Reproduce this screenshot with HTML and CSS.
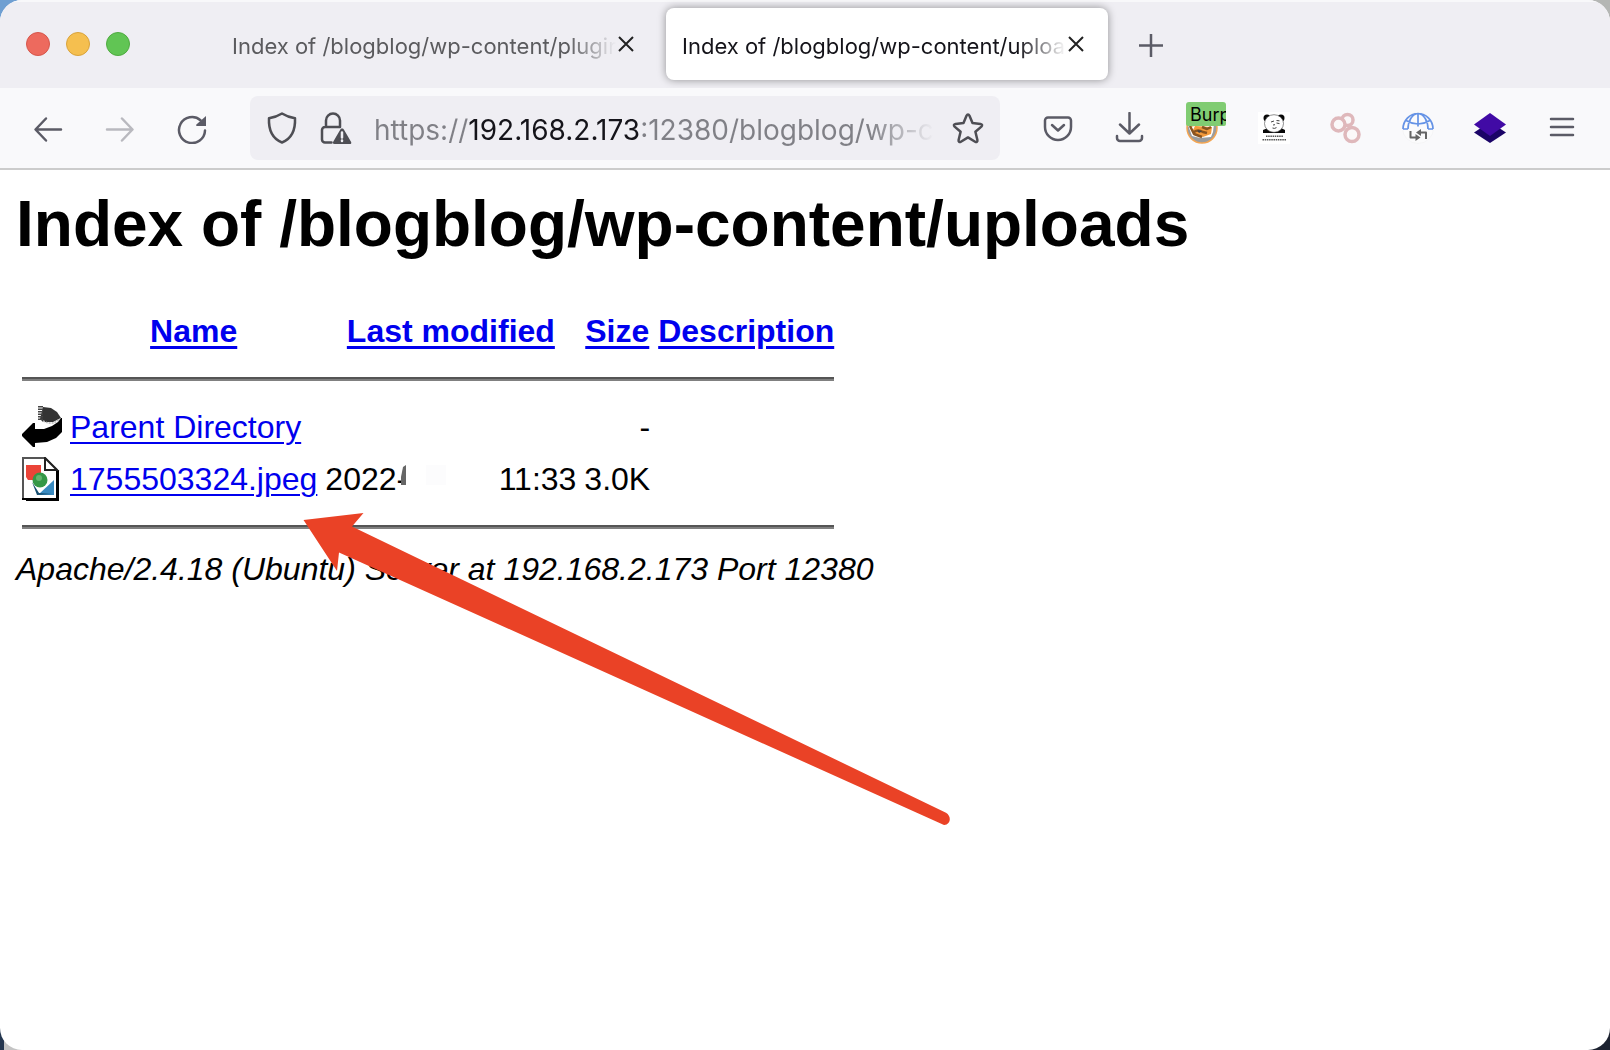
FILE: index.html
```html
<!DOCTYPE html>
<html lang="en">
<head>
<meta charset="utf-8">
<title>Index of /blogblog/wp-content/uploads</title>
<link rel="stylesheet" href="styles.css">
</head>
<body>
<div class="window">
  <header class="tab-bar">
    <div class="window-controls">
      <button class="light light-close" aria-label="Close window"></button>
      <button class="light light-minimize" aria-label="Minimize window"></button>
      <button class="light light-zoom" aria-label="Zoom window"></button>
    </div>
    <nav class="tabs" aria-label="Tabs">
      <div class="tab">
        <button class="tab-title">Index of /blogblog/wp-content/plugins</button>
        <button class="tab-close" aria-label="Close tab"><svg width="20" height="20" viewBox="0 0 20 20"><path d="M3 3l14 14M17 3L3 17"/></svg></button>
      </div>
      <div class="tab tab-active">
        <button class="tab-title">Index of /blogblog/wp-content/uploads</button>
        <button class="tab-close" aria-label="Close tab"><svg width="20" height="20" viewBox="0 0 20 20"><path d="M3 3l14 14M17 3L3 17"/></svg></button>
      </div>
      <button class="new-tab" aria-label="New tab"><svg width="24" height="26" viewBox="0 0 24 26"><path d="M12 3v23M0 14.500h24"/></svg></button>
    </nav>
  </header>

  <div class="toolbar">
    <div class="nav-buttons">
      <button class="tool" aria-label="Back"><svg width="32" height="32" viewBox="0 0 32 32"><path d="M29 17.500H4M14 6.500L3.500 17.500 14 28.500"/></svg></button>
      <button class="tool" aria-label="Forward" disabled><svg width="32" height="32" viewBox="0 0 32 32"><path d="M3 17.500h25M18 6.500l10.500 11L18 28.500"/></svg></button>
      <button class="tool" aria-label="Reload"><svg width="32" height="32" viewBox="0 0 32 32"><path d="M24.500 8.200A13 13 0 1 0 29 18.500"/><path class="solid" d="M30 4v10H21c-1 0-1.200-.8-.6-1.400z"/></svg></button>
    </div>
    <div class="url-bar">
      <button class="url-icon" aria-label="Tracking protection"><svg width="32" height="32" viewBox="0 0 32 32"><path d="M16 1.500c4 2.500 8 4 13 4.800C29.500 17 26 26.500 16 30.500 6 26.500 2.500 17 3 6.300 8 5.500 12 4 16 1.500z"/></svg></button>
      <button class="url-icon" aria-label="Connection not secure"><svg width="32" height="32" viewBox="0 0 32 32"><path d="M11.500 30.500H5a3 3 0 0 1-3-3V18a3 3 0 0 1 3-3h14.500M6 15V8.500a7 7 0 0 1 14 0V15"/><path class="solid" d="M22 16.500c1 0 1.600.5 2 1.200l7 12c.8 1.500 0 2.300-1.200 2.300H14.500c-1.400 0-2-1-1.300-2.300l7-12c.3-.7 1-1.200 1.800-1.200z"/><path class="mark" d="M22 20.500v5M22 28.500v.5"/></svg></button>
      <input class="url-text" type="text" aria-label="Address" value="https://192.168.2.173:12380/blogblog/wp-content/uploads/">
      <button class="url-icon" aria-label="Bookmark this page"><svg width="32" height="32" viewBox="0 0 32 32"><path d="M16 2.500c.8 0 1.200.6 1.500 1.200l3 7.300 8 .9c1.800.3 2 1.600.9 2.700l-6 5.200 2 8.200c.3 1.700-.8 2.600-2.300 1.700L16 25.400l-7.100 4.300c-1.500.9-2.600 0-2.300-1.700l2-8.200-6-5.200c-1.100-1.100-.9-2.400.9-2.700l8-.9 3-7.300c.3-.6.700-1.200 1.500-1.200z"/></svg></button>
    </div>
    <div class="extensions">
      <button class="tool" aria-label="Save to Pocket"><svg width="32" height="32" viewBox="0 0 32 32"><path d="M6 5.500h20a3 3 0 0 1 3 3V15a13 13 0 0 1-26 0V8.500a3 3 0 0 1 3-3zM10 13l6 5.500 6-5.500"/></svg></button>
      <button class="tool" aria-label="Downloads"><svg width="32" height="32" viewBox="0 0 32 32"><path d="M15.500 1v20M6 12.500l9.500 9 9.500-9M3 24v2a3 3 0 0 0 3 3h19a3 3 0 0 0 3-3v-2"/></svg></button>
      <button class="tool proxy" aria-label="Proxy: Burp"><svg class="art" width="32" height="32" viewBox="0 0 32 32"><circle cx="16" cy="16" r="15" fill="#9a9c9e" stroke="#f3a552" stroke-width="1.500"/><path fill="#fff" d="M2 13l4 11 8 2 11-1 2-5 1-8z"/><path fill="#f39a3c" d="M4 14l6 0 16 1-1 7-8 3-8-3z"/><path fill="#fff" d="M4 15l5-1-3 6z"/><path fill="none" stroke="#8a5420" d="M4 14l4 8 8 3M16 15l5 2 4-2M8 20q4-3 9 0l4 1"/><path fill="#444" d="M11 18.500q2-1 5 1l-3 1.500z"/></svg><span class="badge">Burp</span></button>
      <button class="tool" aria-label="Panda extension"><svg class="art" width="32" height="32" viewBox="0 0 32 32"><path fill="#fff" d="M0 0h32v32H0z"/><path fill="#080808" d="M5 21v-3l5-2h13l4 2v3z"/><circle cx="9" cy="6" r="3.500" fill="#080808"/><circle cx="23" cy="6" r="3.500" fill="#080808"/><ellipse cx="16" cy="11.500" rx="9.500" ry="8.800" fill="#fff" stroke="#444" stroke-width=".6"/><path fill="none" stroke="#444" stroke-width="1" d="M13 10l3-1M18.500 8.500l3 .3M15 13l2-.3M18.500 11l3 .6M14.500 16q2 1 4-.4"/><g fill="none" stroke="#555" stroke-width="1.500" stroke-dasharray="1.500 .7"><path d="M8 24.300h17M4.500 27.800h24"/></g></svg></button>
      <button class="tool" aria-label="Chained rings extension"><svg class="art" width="32" height="32" viewBox="0 0 32 32"><g fill="#fbf8f9" stroke="#dfb8bb" stroke-width="3.500"><circle cx="17.500" cy="8" r="5.500"/><circle cx="8.500" cy="12.500" r="6.500"/><circle cx="22" cy="22.500" r="7"/></g></svg></button>
      <button class="tool" aria-label="Proxy switcher"><svg class="art" width="32" height="32" viewBox="0 0 32 32"><circle cx="16" cy="16" r="15.500" fill="#fbfbfc" stroke="#efeff0" stroke-width=".5"/><g fill="none" stroke="#6593e6" stroke-width="1.700"><path d="M1 17a15 15.500 0 0 1 30 0M1 17h5M26 17h5M4 8.500q12 7 24 0M6 17C6 9 10 2 16 1.500 22 2 26 9 26 17M16 1.500v13"/></g><path fill="none" stroke="#666" stroke-width="2" d="M8.500 19v6.500h6M24 27v-6.500h-6"/><path fill="#666" d="M13.500 22l5 3.500-5 3.500zM19 17l-5 3.500 5 3.500z"/></svg></button>
      <button class="tool" aria-label="Layers extension"><svg class="art" width="32" height="32" viewBox="0 0 32 32"><path fill="#1b0467" d="M16 10l16 10.500L16 31 0 20.500z"/><path fill="#410aa5" d="M16 1l16 11.500L16 24 0 12.500z"/></svg></button>
      <button class="tool" aria-label="Open application menu"><svg width="32" height="32" viewBox="0 0 32 32"><path d="M5 7h22M5 15h22M5 23h22"/></svg></button>
    </div>
  </div>

  <main class="page">
    <h1>Index of /blogblog/wp-content/uploads</h1>
    <table class="listing">
      <colgroup><col class="col-icon"><col class="col-name"><col class="col-date"><col class="col-size"><col></colgroup>
      <tr class="head">
        <th></th>
        <th><a href="#name">Name</a></th>
        <th><a href="#modified">Last modified</a></th>
        <th><a href="#size">Size</a></th>
        <th><a href="#description">Description</a></th>
      </tr>
      <tr><td colspan="5"><hr></td></tr>
      <tr>
        <td><svg class="file-icon" width="40" height="44" viewBox="0 0 40 44"><path fill="#333" d="M21 2l8 1 6 4 4 6-8 4H21l-3-3z"/><path fill="none" stroke="#444" stroke-width="5" stroke-dasharray="1.500 1" d="M18.500 1v15"/><path fill="none" stroke="#bbb" stroke-width="1.500" stroke-dasharray="2 1" d="M21 16l5 2h6l6-4"/><path fill="#000" d="M39 13h1v14l-6 6-9 4-12 1v4h-2L0 31v-2l11-11h2v6h9l8-3 6-4z"/></svg></td>
        <td><a href="#parent">Parent Directory</a></td>
        <td></td>
        <td class="size">-</td>
        <td></td>
      </tr>
      <tr>
        <td><svg class="file-icon" width="40" height="44" viewBox="0 0 40 44"><path fill="#fff" stroke="#555" stroke-width="2" d="M1 42V1h22l12 12v29z"/><path fill="#000" d="M0 41h34V13h3v31H4v-1H0z"/><path fill="#fff" stroke="#222" stroke-width="2" d="M23 1v12h12z"/><path fill="#eb4438" d="M4 8h15v15H6l-2-3z"/><path fill="#398ac0" d="M32 23v15H16z"/><path fill="#174e70" d="M10 25l7 11 13 1-15 1z"/><circle cx="18" cy="23" r="7.500" fill="#359847"/><circle cx="17" cy="21" r="3" fill="#65b56f"/></svg></td>
        <td><a href="#image">1755503324.jpeg</a></td>
        <td><div class="date"><span>2022-</span><svg class="smudge" width="48" height="20" viewBox="0 0 48 20"><path fill="#fff" d="M2 0h46v20H2z"/><path fill="#666" d="M6 0v20H1V12L3 2z"/><path fill="#fcfcfd" d="M26 0h20v20H26z"/></svg><span>11:33</span></div></td>
        <td class="size">3.0K</td>
        <td></td>
      </tr>
      <tr><td colspan="5"><hr></td></tr>
    </table>
    <address>Apache/2.4.18 (Ubuntu) Server at 192.168.2.173 Port 12380</address>
    <svg class="arrow" width="648" height="316" viewBox="303 512 648 316" aria-hidden="true"><path fill="#ea4226" d="M303.500 520l60-7-11.500 13.500 594 286.200c6 3.500 4.500 12.500-2 12.300L339 552.500 337 571z"/></svg>
  </main>
</div>
</body>
</html>
```
FILE: styles.css
```css
* { box-sizing: border-box; }

body {
  margin: 0;
  background:
    linear-gradient(#6f9fd2, #6f9fd2) 0 0 / 50% 50% no-repeat,
    linear-gradient(#b4b6b4, #b4b6b4) 100% 0 / 50% 50% no-repeat,
    linear-gradient(90deg, #24364f 4px, #c4c4c4 4px) 0 100% / 50% 50% no-repeat,
    #1c2230;
}

button {
  padding: 0;
  border: 0;
  background: none;
  color: inherit;
  font: inherit;
}

svg { display: block; }

.window {
  display: flex;
  flex-direction: column;
  min-height: 100vh;
  overflow: hidden;
  border-radius: 22px;
  background: #fff;
}

/* Tab strip */
.tab-bar {
  display: flex;
  height: 88px;
  padding-left: 26px;
  background: #efeef3;
  box-shadow: inset 0 2px #f8f8fa;
}

.window-controls {
  display: flex;
  align-items: center;
  gap: 16px;
  width: 190px;
}

.light {
  width: 24px;
  height: 24px;
  border: 1px solid;
  border-radius: 50%;
}
.light-close { background: #ed6a5e; border-color: #d6564b; }
.light-minimize { background: #f5bf4f; border-color: #d9a33b; }
.light-zoom { background: #61c554; border-color: #4fab40; }

.tabs {
  display: flex;
  align-items: center;
  gap: 8px;
}

.tab {
  display: flex;
  align-items: center;
  width: 442px;
  height: 72px;
  padding: 0 22px 0 16px;
  border-radius: 8px;
  color: #5b5b5e;
  font: 22px/32px Inter, sans-serif;
}

.tab-active {
  background: #fff;
  color: #15141a;
  box-shadow: 0 0 8px rgba(0, 0, 0, .4);
}

.tab-title {
  flex: 1;
  min-width: 0;
  overflow: hidden;
  padding-top: 4px;
  text-align: left;
  white-space: nowrap;
  mask-image: linear-gradient(to left, transparent, #000 48px);
}

.tab-close svg { fill: none; stroke: #222; stroke-width: 2; }

.new-tab { padding-left: 23px; }
.new-tab svg { fill: none; stroke: #5b5b66; stroke-width: 2.5; }

/* Navigation toolbar */
.toolbar {
  display: flex;
  align-items: center;
  height: 82px;
  padding: 0 32px;
  border-bottom: 2px solid #ccc;
  background: #f9f9fb;
}

.nav-buttons {
  display: flex;
  gap: 40px;
  width: 218px;
}

.tool svg, .url-icon svg {
  fill: none;
  stroke: #5b5b66;
  stroke-width: 2.5;
  stroke-linecap: round;
  stroke-linejoin: round;
}
.tool:disabled { opacity: .4; }
.tool .art { stroke: none; stroke-linecap: butt; }
.tool .solid { fill: #5b5b66; stroke: none; }

.url-bar {
  display: flex;
  flex: 1;
  align-items: center;
  gap: 22px;
  min-width: 0;
  height: 64px;
  padding: 0 16px;
  border-radius: 8px;
  background: #efeef3;
}

.url-icon svg { stroke: #4e4e54; }
.url-icon .solid { fill: #4e4e54; stroke: none; }
.url-icon .mark { stroke: #efeef3; }

.url-text {
  flex: 1;
  min-width: 0;
  height: 48px;
  margin-right: -12px;
  padding: 4px 0 0;
  border: 0;
  outline: 0;
  background: linear-gradient(90deg, #808086 94px, #15141a 94px 267px, #808086 267px);
  background-clip: text;
  color: transparent;
  font: 28px/40px Inter, sans-serif;
  mask-image: linear-gradient(to left, transparent 8px, #000 72px);
}

.extensions {
  display: flex;
  align-items: center;
  gap: 40px;
  padding: 0 0 0 42px;
}

.proxy { position: relative; }
.badge {
  position: absolute;
  top: -10px;
  left: 0;
  width: 40px;
  height: 24px;
  overflow: hidden;
  padding-left: 4px;
  border-radius: 3px 3px 2px 2px;
  background: #80cc72;
  color: #000;
  font: 18px/26px Inter, sans-serif;
  text-align: left;
}

/* Directory listing */
.page {
  position: relative;
  flex: 1;
  padding: 17px 16px 16px;
  color: #000;
  font: 32px/37px "Liberation Sans", Arial, sans-serif;
}

h1 {
  margin: 0 0 42px;
  font-size: 64px;
  line-height: 74px;
}

a { color: #0000ee; text-decoration-thickness: 2px; text-underline-offset: 4px; }
th a { text-decoration-thickness: 3px; }

.listing {
  border-spacing: 4px;
  font: inherit;
}
.listing th, .listing td { padding: 2px; white-space: nowrap; }
.head { height: 48px; }
.col-icon { width: 44px; }
.col-name { width: 251px; }
.col-date { width: 255px; }
.size { text-align: right; }

.date { display: flex; align-items: center; }
.date span:last-child { margin-left: auto; }
.smudge { margin: -8px 0 0 -7px; }

hr {
  margin: 16px 0;
  height: 4px;
  border: 0;
  border-top: 2px solid #555;
  background: #808080;
}

address { line-height: 36px; }

.arrow {
  position: absolute;
  top: 342px;
  left: 303px;
}
```
